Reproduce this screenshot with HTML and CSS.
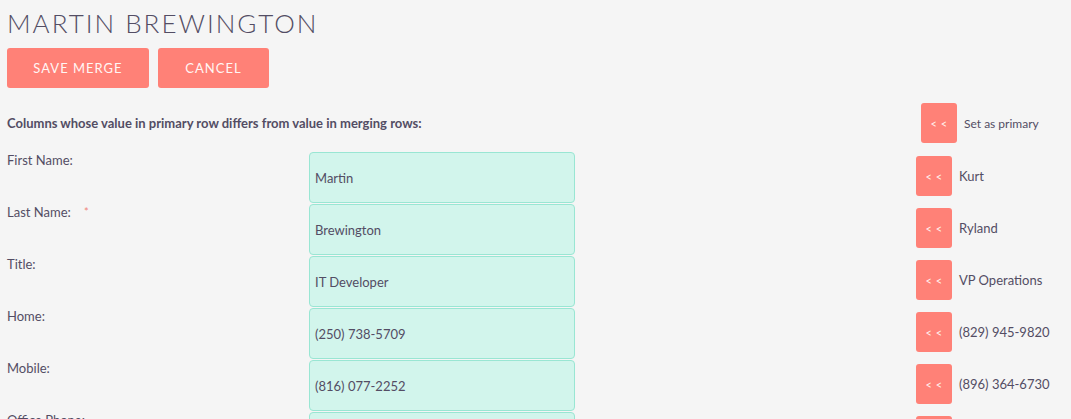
FILE: index.html
```html
<!DOCTYPE html>
<html>
<head>
<meta charset="utf-8">
<link rel="stylesheet" href="styles.css">
</head>
<body>
<h1 class="title">MARTIN BREWINGTON</h1>
<div class="actions">
  <button class="btn btn-save">SAVE MERGE</button>
  <button class="btn btn-cancel">CANCEL</button>
</div>
<div class="merge">
  <div class="head-row">
    <div class="head-text">Columns whose value in primary row differs from value in merging rows:</div>
    <div class="head-primary">
      <button class="arrow">&lt; &lt;</button>
      <span class="primary-label">Set as primary</span>
    </div>
  </div>
  <div class="row">
    <div class="label">First Name:</div>
    <div class="field">Martin</div>
    <div class="alt"><button class="arrow">&lt; &lt;</button><span class="alt-value">Kurt</span></div>
  </div>
  <div class="row">
    <div class="label">Last Name: <span class="req">*</span></div>
    <div class="field">Brewington</div>
    <div class="alt"><button class="arrow">&lt; &lt;</button><span class="alt-value">Ryland</span></div>
  </div>
  <div class="row">
    <div class="label">Title:</div>
    <div class="field">IT Developer</div>
    <div class="alt"><button class="arrow">&lt; &lt;</button><span class="alt-value">VP Operations</span></div>
  </div>
  <div class="row">
    <div class="label">Home:</div>
    <div class="field">(250) 738-5709</div>
    <div class="alt"><button class="arrow">&lt; &lt;</button><span class="alt-value">(829) 945-9820</span></div>
  </div>
  <div class="row">
    <div class="label">Mobile:</div>
    <div class="field">(816) 077-2252</div>
    <div class="alt"><button class="arrow">&lt; &lt;</button><span class="alt-value">(896) 364-6730</span></div>
  </div>
  <div class="row">
    <div class="label">Office Phone:</div>
    <div class="field">(555) 210-4471</div>
    <div class="alt"><button class="arrow">&lt; &lt;</button><span class="alt-value">(741) 558-3310</span></div>
  </div>
</div>
</body>
</html>
```

FILE: styles.css
```css
html, body {
  margin: 0;
  padding: 0;
  background: #f5f5f5;
}
body {
  padding: 0 7px;
  font-family: Lato, "Open Sans", "Liberation Sans", sans-serif;
  color: #534d64;
  overflow: hidden;
  height: 419px;
}
.title {
  margin: 0;
  padding-top: 8px;
  font-size: 26px;
  line-height: 30px;
  font-weight: 300;
  letter-spacing: 2px;
  color: #534d64;
}
.actions {
  display: flex;
  gap: 9px;
  margin-top: 10px;
}
.btn {
  border: none;
  border-radius: 3px;
  background: #ff8177;
  color: #fff6f4;
  font-family: Lato, "Open Sans", sans-serif;
  font-size: 13px;
  letter-spacing: 1px;
  height: 40px;
  padding: 0;
}
.btn-save { width: 142px; }
.btn-cancel { width: 111px; }
.merge {
  margin-top: 15px;
}
.head-row {
  display: flex;
  align-items: center;
  height: 40px;
  margin-bottom: 9px;
}
.head-text {
  width: 914px;
  font-size: 13px;
  font-weight: 700;
}
.head-primary {
  display: flex;
  align-items: center;
  gap: 7px;
}
.primary-label {
  font-size: 12px;
}
.arrow {
  width: 36px;
  height: 40px;
  border: none;
  border-radius: 3px;
  background: #ff8177;
  color: #fff2ee;
  font-family: Lato, "Open Sans", sans-serif;
  font-size: 11px;
  padding: 0;
  letter-spacing: 0.5px;
}
.row {
  display: flex;
  height: 52px;
}
.label {
  width: 302px;
  font-size: 13px;
  line-height: 16px;
}
.req {
  color: #f08377;
  margin-left: 10px;
  font-size: 11px;
  vertical-align: top;
}
.field {
  width: 266px;
  height: 51px;
  box-sizing: border-box;
  border: 1px solid #99e6d3;
  border-radius: 4px;
  background: #d2f5ec;
  font-size: 13px;
  display: flex;
  align-items: center;
  padding: 0 5px;
}
.alt {
  margin-left: 341px;
  display: flex;
  align-items: center;
  gap: 7px;
  height: 48px;
}
.alt-value {
  font-size: 13px;
}
```
